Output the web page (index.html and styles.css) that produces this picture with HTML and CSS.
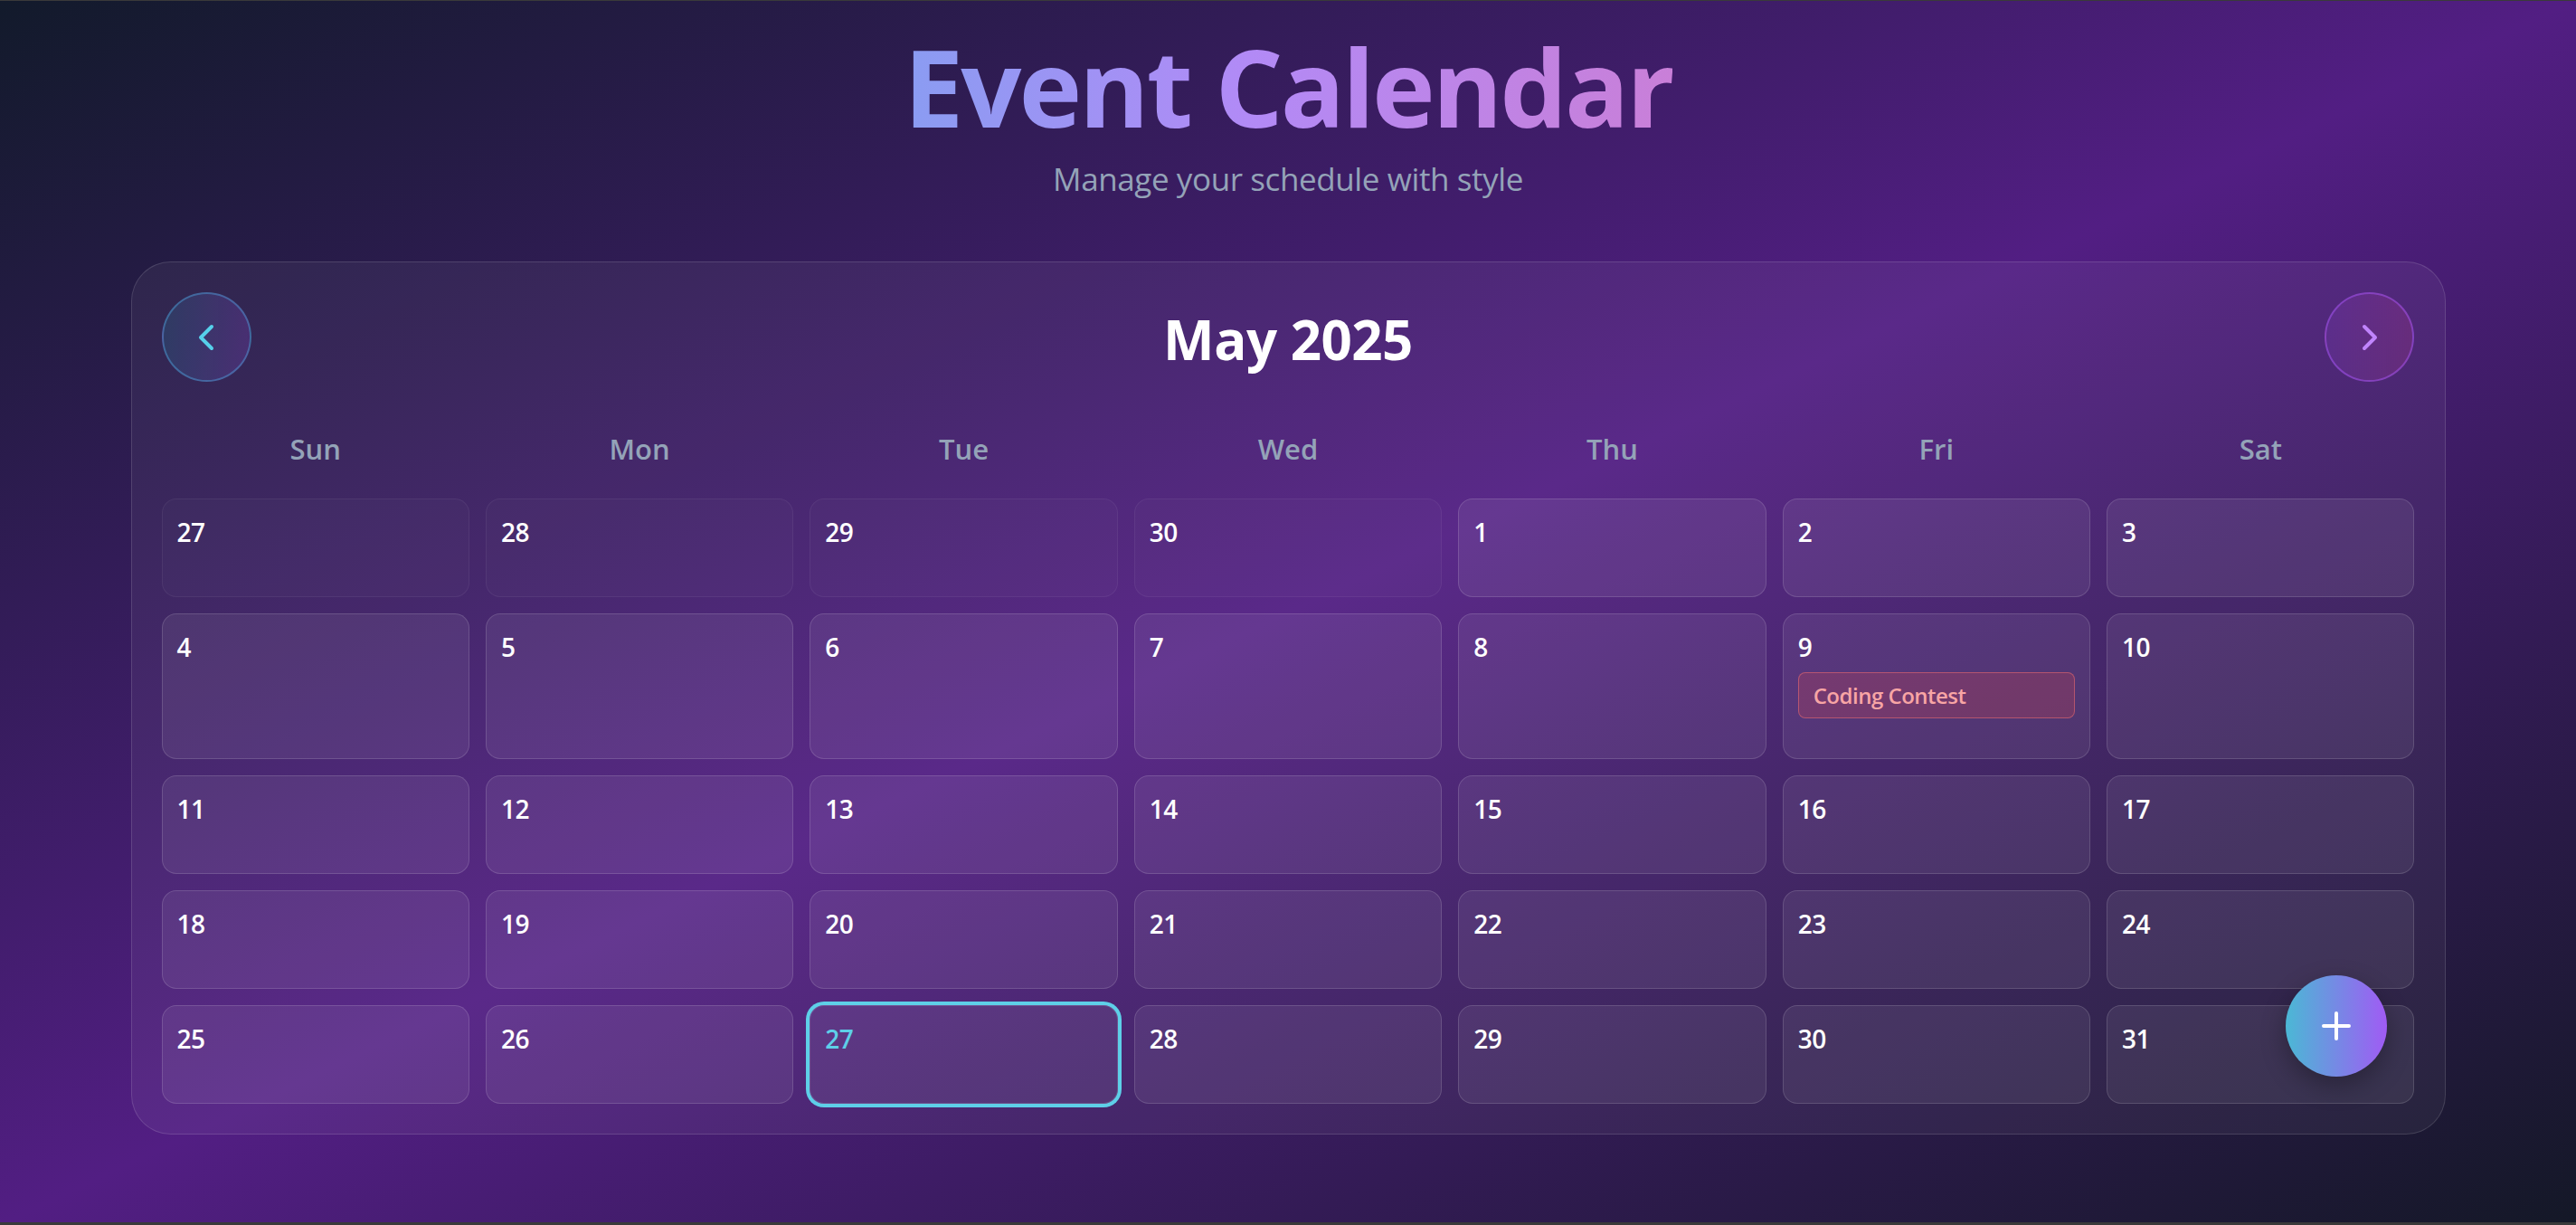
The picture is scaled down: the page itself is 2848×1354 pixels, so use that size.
FILE: index.html
```html
<!DOCTYPE html>
<html lang="en">
<head>
<meta charset="utf-8">
<title>Event Calendar</title>
<link rel="stylesheet" href="styles.css">
</head>
<body>
<div class="app">
  <header class="hero">
    <h1 class="hero-title"><span class="grad-text">Event Calendar</span></h1>
    <p class="hero-sub">Manage your schedule with style</p>
  </header>

  <main class="calendar">
    <div class="cal-head">
      <button class="nav nav-prev" aria-label="Previous month">
        <svg viewBox="0 0 24 24" width="48" height="48" fill="none" stroke="currentColor" stroke-width="2" stroke-linecap="round" stroke-linejoin="round"><path d="m15 18-6-6 6-6"/></svg>
      </button>
      <h2 class="month">May 2025</h2>
      <button class="nav nav-next" aria-label="Next month">
        <svg viewBox="0 0 24 24" width="48" height="48" fill="none" stroke="currentColor" stroke-width="2" stroke-linecap="round" stroke-linejoin="round"><path d="m9 18 6-6-6-6"/></svg>
      </button>
    </div>

    <div class="weekdays">
      <div class="wd">Sun</div><div class="wd">Mon</div><div class="wd">Tue</div><div class="wd">Wed</div><div class="wd">Thu</div><div class="wd">Fri</div><div class="wd">Sat</div>
    </div>

    <div class="grid">
      <div class="cell other"><span class="num">27</span></div>
      <div class="cell other"><span class="num">28</span></div>
      <div class="cell other"><span class="num">29</span></div>
      <div class="cell other"><span class="num">30</span></div>
      <div class="cell"><span class="num">1</span></div>
      <div class="cell"><span class="num">2</span></div>
      <div class="cell"><span class="num">3</span></div>

      <div class="cell"><span class="num">4</span></div>
      <div class="cell"><span class="num">5</span></div>
      <div class="cell"><span class="num">6</span></div>
      <div class="cell"><span class="num">7</span></div>
      <div class="cell"><span class="num">8</span></div>
      <div class="cell"><span class="num">9</span>
        <div class="events"><div class="event">Coding Contest</div></div>
      </div>
      <div class="cell"><span class="num">10</span></div>

      <div class="cell"><span class="num">11</span></div>
      <div class="cell"><span class="num">12</span></div>
      <div class="cell"><span class="num">13</span></div>
      <div class="cell"><span class="num">14</span></div>
      <div class="cell"><span class="num">15</span></div>
      <div class="cell"><span class="num">16</span></div>
      <div class="cell"><span class="num">17</span></div>

      <div class="cell"><span class="num">18</span></div>
      <div class="cell"><span class="num">19</span></div>
      <div class="cell"><span class="num">20</span></div>
      <div class="cell"><span class="num">21</span></div>
      <div class="cell"><span class="num">22</span></div>
      <div class="cell"><span class="num">23</span></div>
      <div class="cell"><span class="num">24</span></div>

      <div class="cell"><span class="num">25</span></div>
      <div class="cell"><span class="num">26</span></div>
      <div class="cell today"><span class="num">27</span></div>
      <div class="cell"><span class="num">28</span></div>
      <div class="cell"><span class="num">29</span></div>
      <div class="cell"><span class="num">30</span></div>
      <div class="cell"><span class="num">31</span></div>
    </div>

    <button class="fab" aria-label="Add event">
      <svg viewBox="0 0 24 24" width="48" height="48" fill="none" stroke="currentColor" stroke-width="2" stroke-linecap="round"><path d="M12 5v14M5 12h14"/></svg>
    </button>
  </main>
</div>
</body>
</html>
```

FILE: styles.css
```css
html, body {
  margin: 0;
  padding: 0;
}

body {
  font-family: "Open Sans", "Noto Sans", "Liberation Sans", sans-serif;
  color: #ffffff;
  background: #111827;
}

.app {
  box-sizing: border-box;
  min-height: 100vh;
  border-top: 1px solid #3a3a3a;
  border-bottom: 3px solid #3a3a3a;
  padding: 30px 0 40px;
  background: linear-gradient(to bottom right, #121a2b 0%, #521e83 50%, #141827 100%);
  background-attachment: fixed;
}

/* ---------- hero ---------- */
.hero {
  text-align: center;
}

.hero-title {
  margin: 0;
  font-size: 118px;
  line-height: 130px;
  font-weight: 700;
  letter-spacing: -3px;
}

.grad-text {
  display: inline-block;
  background: linear-gradient(90deg, #8a9cf2 0%, #b28af6 45%, #c97fd8 100%);
  -webkit-background-clip: text;
  background-clip: text;
  color: transparent;
}

.hero-sub {
  margin: 11px 0 0;
  font-size: 35px;
  line-height: 52px;
  letter-spacing: -0.4px;
  color: #94a3b8;
}

/* ---------- calendar card ---------- */
.calendar {
  position: relative;
  box-sizing: border-box;
  max-width: 2559px;
  margin: 65px auto 0;
  padding: 33px;
  border: 1px solid rgba(255, 255, 255, 0.13);
  border-radius: 44px;
  background: rgba(255, 255, 255, 0.05);
}

.cal-head {
  display: flex;
  align-items: center;
  justify-content: space-between;
}

.nav {
  box-sizing: border-box;
  width: 99px;
  height: 99px;
  border-radius: 50%;
  display: flex;
  align-items: center;
  justify-content: center;
  padding: 0;
  cursor: pointer;
}

.nav-prev {
  border: 2px solid rgba(80, 165, 225, 0.45);
  background: linear-gradient(90deg, rgba(34, 211, 238, 0.12), rgba(168, 85, 247, 0.18));
  color: #56d0ea;
}

.nav-next {
  border: 2px solid rgba(168, 85, 247, 0.5);
  background: linear-gradient(90deg, rgba(168, 85, 247, 0.14), rgba(236, 72, 153, 0.16));
  color: #c084fc;
}

.month {
  margin: 0;
  padding-top: 4px;
  font-size: 60px;
  line-height: 72px;
  font-weight: 700;
  letter-spacing: -0.5px;
  color: #ffffff;
}

.weekdays {
  display: grid;
  grid-template-columns: repeat(7, 1fr);
  column-gap: 18px;
  margin-top: 51px;
}

.wd {
  text-align: center;
  font-size: 31px;
  line-height: 46px;
  font-weight: 600;
  color: #94a3b8;
}

.grid {
  display: grid;
  grid-template-columns: repeat(7, 1fr);
  gap: 18px;
  margin-top: 32px;
}

.cell {
  box-sizing: border-box;
  min-height: 109px;
  padding: 16px 16px 16px;
  border: 1px solid rgba(255, 255, 255, 0.14);
  border-radius: 16px;
  background: rgba(255, 255, 255, 0.07);
}

.cell.other {
  background: rgba(255, 255, 255, 0.02);
  border-color: rgba(255, 255, 255, 0.06);
}

.num {
  display: block;
  font-size: 28px;
  line-height: 40px;
  font-weight: 600;
  letter-spacing: -0.5px;
  color: #ffffff;
}

.cell.today {
  box-shadow: 0 0 0 4px #5ecfe8;
}

.cell.today .num {
  color: #5ecfe8;
}

.events {
  margin: 8px 0 28px;
}

.event {
  box-sizing: border-box;
  height: 51px;
  padding: 0 16px;
  border: 1px solid rgba(248, 113, 113, 0.5);
  border-radius: 8px;
  background: rgba(239, 68, 68, 0.2);
  color: #f8a5a5;
  font-size: 24px;
  line-height: 49px;
  font-weight: 600;
  letter-spacing: -0.5px;
  white-space: nowrap;
  overflow: hidden;
}

/* ---------- floating action button ---------- */
.fab {
  position: absolute;
  right: 64px;
  bottom: 63px;
  width: 112px;
  height: 112px;
  border: none;
  border-radius: 50%;
  padding: 0;
  display: flex;
  align-items: center;
  justify-content: center;
  color: #ffffff;
  background: linear-gradient(90deg, #4bb8d5 0%, #a05bf4 100%);
  box-shadow: 0 10px 28px rgba(0, 0, 0, 0.3);
  cursor: pointer;
}
```
